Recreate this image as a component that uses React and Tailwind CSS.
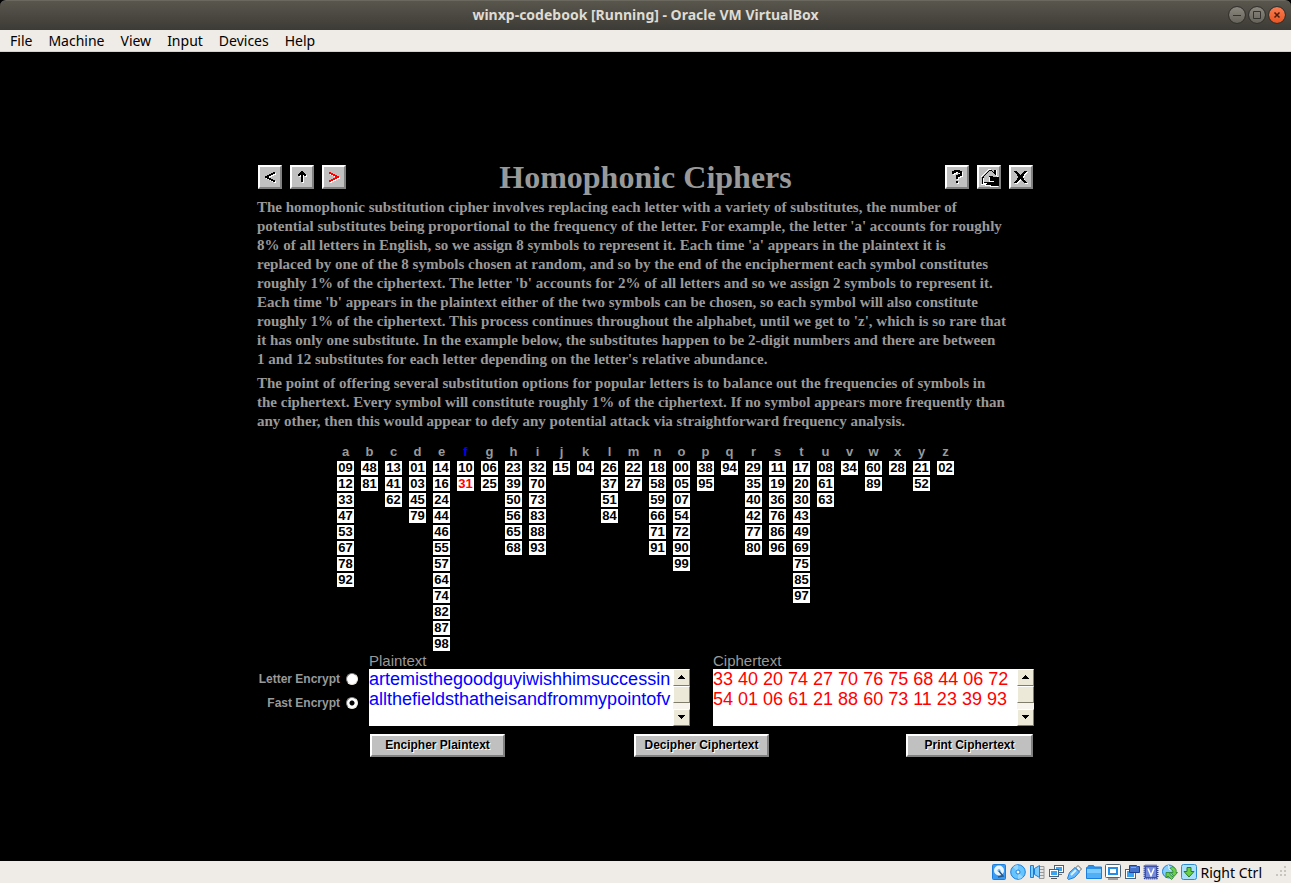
import React from "react";

const columns = {
  a: "09 12 33 47 53 67 78 92", b: "48 81", c: "13 41 62", d: "01 03 45 79",
  e: "14 16 24 44 46 55 57 64 74 82 87 98", f: "10 31", g: "06 25",
  h: "23 39 50 56 65 68", i: "32 70 73 83 88 93", j: "15", k: "04",
  l: "26 37 51 84", m: "22 27", n: "18 58 59 66 71 91", o: "00 05 07 54 72 90 99",
  p: "38 95", q: "94", r: "29 35 40 42 77 80", s: "11 19 36 76 86 96",
  t: "17 20 30 43 49 69 75 85 97", u: "08 61 63", v: "34", w: "60 89",
  x: "28", y: "21 52", z: "02",
};
const letters = Object.keys(columns);
const substitutes = letters.map((l) => columns[l].split(" "));
const rowIndexes = Array.from({ length: 12 }, (_, i) => i);

const intro = [
  "The homophonic substitution cipher involves replacing each letter with a variety of substitutes, the number of",
  "potential substitutes being proportional to the frequency of the letter. For example, the letter 'a' accounts for roughly",
  "8% of all letters in English, so we assign 8 symbols to represent it. Each time 'a' appears in the plaintext it is",
  "replaced by one of the 8 symbols chosen at random, and so by the end of the encipherment each symbol constitutes",
  "roughly 1% of the ciphertext. The letter 'b' accounts for 2% of all letters and so we assign 2 symbols to represent it.",
  "Each time 'b' appears in the plaintext either of the two symbols can be chosen, so each symbol will also constitute",
  "roughly 1% of the ciphertext. This process continues throughout the alphabet, until we get to 'z', which is so rare that",
  "it has only one substitute. In the example below, the substitutes happen to be 2-digit numbers and there are between",
  "1 and 12 substitutes for each letter depending on the letter's relative abundance.",
];
const point = [
  "The point of offering several substitution options for popular letters is to balance out the frequencies of symbols in",
  "the ciphertext. Every symbol will constitute roughly 1% of the ciphertext. If no symbol appears more frequently than",
  "any other, then this would appear to defy any potential attack via straightforward frequency analysis.",
];

const bevel = "border-2 border-t-white border-l-white border-r-[#808080] border-b-[#808080] bg-[#c0c0c0]";

function Paragraph({ lines }) {
  return (
    <p className="whitespace-nowrap font-['Liberation_Serif',serif] text-[15px] leading-[19px] font-bold text-[#999999]">
      {lines.map((line) => (
        <React.Fragment key={line}>{line}<br /></React.Fragment>
      ))}
    </p>
  );
}

function NavButton({ label, children }) {
  return (
    <button aria-label={label} className={`flex size-6 items-center justify-center ${bevel}`}>
      <svg width="20" height="20" viewBox="0 0 20 20" fill="none" shapeRendering="crispEdges">{children}</svg>
    </button>
  );
}

function Glyph({ d, color = "#000", width = 2 }) {
  return (
    <>
      <path d={d} stroke="#fff" strokeWidth={width} transform="translate(1 1)" />
      <path d={d} stroke={color} strokeWidth={width} />
    </>
  );
}

function ScrollBar({ name }) {
  const part = "flex items-center justify-center border border-t-white border-l-white border-r-[#807d6c] border-b-[#807d6c] bg-[#ece9d8]";
  return (
    <div className="flex w-[17px] shrink-0 flex-col bg-[#f6f4ec]">
      <button aria-label={`Scroll ${name} up`} className={`h-[17px] ${part}`}>
        <svg width="7" height="4" shapeRendering="crispEdges"><path d="M3 0h1v1h1v1h1v1h1v1H0V3h1V2h1V1h1z" /></svg>
      </button>
      <div className={`h-[17px] ${part}`} />
      <div className="flex-1" />
      <button aria-label={`Scroll ${name} down`} className={`h-[17px] ${part}`}>
        <svg width="7" height="4" shapeRendering="crispEdges"><path d="M0 0h7v1H6v1H5v1H4v1H3V3H2V2H1V1H0z" /></svg>
      </button>
    </div>
  );
}

function TextPanel({ id, label, color, value }) {
  return (
    <div className="w-[321px]">
      <label htmlFor={id} className="block h-4 text-[15px] leading-4 text-[#999999]">{label}</label>
      <div className="flex h-[57px] bg-white">
        <textarea id={id} wrap="off" defaultValue={value} spellCheck={false}
          className={`block h-full min-w-0 flex-1 resize-none overflow-hidden bg-white text-lg leading-5 outline-none ${color}`} />
        <ScrollBar name={label} />
      </div>
    </div>
  );
}

function Radio({ label, checked }) {
  return (
    <label className="flex h-6 items-center justify-end gap-[6px] text-xs font-bold whitespace-nowrap text-[#999999]">
      {label}
      <input type="radio" name="mode" defaultChecked={checked}
        className="size-3 appearance-none rounded-full border border-t-[#808080] border-l-[#808080] border-r-[#ece9d8] border-b-[#ece9d8] bg-white checked:bg-[radial-gradient(circle,#000_2px,#fff_3px)]" />
    </label>
  );
}

function Action({ children, className }) {
  return (
    <button className={`flex h-[23px] items-center justify-center text-xs font-bold text-black [text-shadow:1px_1px_0_#fff] ${bevel} ${className}`}>
      {children}
    </button>
  );
}

const stroke = { stroke: "#1a7fdc", strokeWidth: 1 };
const statusIcons = [
  ["Hard disks", <><rect x="1.5" y=".5" width="13" height="15" rx="1" fill="#3a9cf5" {...stroke} /><circle cx="8" cy="6.500" r="5" fill="#e8f5ff" /><circle cx="8" cy="6.500" r="1.500" fill="#75b7e8" /><path d="M8 7l4 5-5 1" fill="none" stroke="#24598c" strokeWidth="1.500" /></>],
  ["Optical drives", <><circle cx="8" cy="8" r="7.300" fill="#66c4ff" {...stroke} /><path d="M8 8L3 3a7 7 0 0 1 5-2zM8 8l5 5a7 7 0 0 1-5 2z" fill="#94d6ff" /><circle cx="8" cy="8" r="2" fill="#fff" {...stroke} /></>],
  ["Audio", <><path d="M11 2.500h4v12h-5" fill="#e4e4e4" stroke="#999" /><path d="M11 5.500h4M11 8.500h4M11 11.500h4" stroke="#999" /><path d="M1.500 1.500h3v12h-3zM5.500 4.500l5-3v12l-5-3z" fill="#7ccbff" {...stroke} /></>],
  ["Network", <><rect x="6.500" y="1.500" width="9" height="7" fill="#fff" stroke="#48627a" /><rect x="8" y="3" width="6" height="4" fill="#3ba4f2" /><path d="M10 10.500h4" stroke="#777" /><rect x="1.500" y="5.500" width="9" height="7" fill="#fff" stroke="#48627a" /><rect x="3" y="7" width="6" height="4" fill="#3ba4f2" /><path d="M3 14.500h6" stroke="#555" /></>],
  ["USB", <><path d="M11 1.500l3.500 3.500-2.500 2.500L8.500 4z" fill="#eee" stroke="#666" /><path d="M8 3.500l4.500 4.500-5 5.500-6 2-1-1 2-6z" fill="#63baff" {...stroke} /><path d="M4 11l5-5" stroke="#d7f1ff" strokeWidth="2" /></>],
  ["Shared folders", <><path d="M.5 14.500v-11h1l1-2h5l1 1.500h7v11.500z" fill="#2c91e6" {...stroke} /><path d="M1 5h14v9H1z" fill="#7bcaff" /><path d="M1 9h14v5H1z" fill="#50aff5" /></>],
  ["Display", <><rect x=".5" y=".5" width="15" height="13" rx="1" fill="#fff" stroke="#4e6474" /><rect x="4" y="4" width="8" height="6" fill="#fff" stroke="#248de6" strokeWidth="2" /><path d="M3 15h10" stroke="#555" /></>],
  ["Recording", <><rect x="1.500" y="5.500" width="10" height="9" fill="#fff" stroke="#48627a" /><rect x="3" y="7" width="7" height="6" fill="#3ba4f2" /><path d="M5.500 1.500h7l1 1h2v6h-10z" fill="#4772c9" stroke="#1e3f93" /><path d="M7 3.500h5" stroke="#7aa8f0" /></>],
  ["Processor", <><rect x="1.500" y="1.500" width="13" height="13" rx="1" fill="#7a90df" stroke="#2d3f93" strokeWidth="2" strokeDasharray="1 1" /><rect x="2.500" y="2.500" width="11" height="11" fill="#7489dc" stroke="#3e50a4" /><path d="M5 4.500l3 7 3-7" fill="none" stroke="#fff" strokeWidth="1.500" /></>],
  ["Mouse integration", <><circle cx="7" cy="7.500" r="6.500" fill="#84cfff" {...stroke} /><path d="M6 1c2 2 0 4 2 5l3-1" stroke="#fff" fill="none" /><path d="M10 2.500c3 1 5 3 4 6h1.500L12 12.500 9 8.500h2c0-2-1-3-3-4z" fill="#6bd04a" stroke="#28802d" strokeWidth=".8" /><path d="M4 8.500h5l-1.500 1.500 4 3.500-2 2L6 12l-2 2z" fill="#6bd04a" stroke="#28802d" strokeWidth=".8" /></>],
  ["Keyboard", <><rect x=".5" y=".5" width="15" height="15" rx="2" fill="#a9e0ff" stroke="#2d8cd0" /><path d="M6 3.500h4v4h3L8 13 3 7.500h3z" fill="#69d047" stroke="#287d26" /></>],
];

export default function App() {
  return (
    <div className="flex min-h-screen flex-col bg-black font-['Liberation_Sans',Arial,sans-serif]">
      <header className="font-['Noto_Sans',sans-serif]">
        <div className="bg-black">
          <div className="grid h-[30px] grid-cols-[1fr_auto_1fr] items-center rounded-t-md border-t border-[#6b685f] bg-linear-to-b from-[#59564d] to-[#3d3b36] px-[6px] pb-[2px]">
            <h1 className="col-start-2 text-[14px] font-bold text-[#dfdbd2]">winxp-codebook [Running] - Oracle VM VirtualBox</h1>
            <div className="flex justify-end gap-1">
              <button aria-label="Minimize" className="size-4 rounded-full bg-linear-to-b from-[#8b8880] to-[#66635b] outline outline-[#33322d]">
                <svg viewBox="0 0 16 16"><path d="M4 8.500h8" stroke="#33322d" /></svg>
              </button>
              <button aria-label="Maximize" className="size-4 rounded-full bg-linear-to-b from-[#8b8880] to-[#66635b] outline outline-[#33322d]">
                <svg viewBox="0 0 16 16"><path d="M4.500 4.500h7v7h-7z" fill="none" stroke="#33322d" /></svg>
              </button>
              <button aria-label="Close" className="size-4 rounded-full bg-linear-to-b from-[#f97c50] to-[#e9541f] outline outline-[#33322d]">
                <svg viewBox="0 0 16 16"><path d="M5.500 5.500l5 5M10.500 5.500l-5 5" stroke="#4a1d0c" strokeWidth="1.500" /></svg>
              </button>
            </div>
          </div>
        </div>
        <nav className="flex h-[22px] items-center gap-4 border-b border-[#d5d2cc] bg-[#efebe7] px-[10px] text-[14px] text-black">
          {["File", "Machine", "View", "Input", "Devices", "Help"].map((item) => (
            <button key={item}>{item}</button>
          ))}
        </nav>
      </header>

      <main className="flex flex-1 items-center justify-center pt-2">
        <div className="w-full max-w-[777px]">
          <div className="flex items-center justify-between px-px">
            <div className="flex gap-2">
              <NavButton label="Back"><Glyph d="M15 5.500L6 10l9 4.500" /></NavButton>
              <NavButton label="Up"><Glyph d="M10 15V5M6 9l4-4 4 4" /></NavButton>
              <NavButton label="Next"><Glyph d="M5 5.500L14 10l-9 4.500" color="#f00" /></NavButton>
            </div>
            <h2 className="font-['Liberation_Serif',serif] text-[32px] leading-[22px] font-bold text-[#999999]">Homophonic Ciphers</h2>
            <div className="flex gap-2">
              <NavButton label="Help"><Glyph d="M6 7V5h2V4h4v1h2v3h-2v1h-2v3M10 14v2" /></NavButton>
              <NavButton label="Home">
                <path d="M2 11l8-8h2l3 3V3h2v5l3 3v8H9l-6-2v-6z" fill="#000" />
                <path d="M4 10l6-6h2l6 6h-4v-1h-4v5h2v1H5v-5z" fill="#c0c0c0" />
                <path d="M2 10l8-8h2M17 3v5l2 2" stroke="#fff" />
                <path d="M4.500 11v5h3M10.500 10v4.500h4" stroke="#fff" />
                <path d="M2 17h4v1h5v1h8" stroke="#fff" />
              </NavButton>
              <NavButton label="Close page"><Glyph d="M4 4l11 12M15 4L4 16" width={2.5} /></NavButton>
            </div>
          </div>

          <div className="mt-[9px] flex flex-col gap-[5px]">
            <Paragraph lines={intro} />
            <Paragraph lines={point} />
          </div>

          <table className="mt-[14px] ml-20 border-collapse text-[13px] leading-[14px] font-bold">
            <thead>
              <tr>
                {letters.map((l) => (
                  <th key={l} className="h-4 w-6 p-0 align-top">
                    <span className={`block w-[17px] text-center ${l === "f" ? "text-[#0000ff]" : "text-[#999999]"}`}>{l}</span>
                  </th>
                ))}
              </tr>
            </thead>
            <tbody>
              {rowIndexes.map((r) => (
                <tr key={r}>
                  {substitutes.map((list, c) => (
                    <td key={letters[c]} className="h-4 w-6 p-0 align-top">
                      {list[r] && (
                        <span className={`block h-[14px] w-[17px] bg-white text-center ${list[r] === "31" ? "text-[#ff0000]" : "text-black"}`}>{list[r]}</span>
                      )}
                    </td>
                  ))}
                </tr>
              ))}
            </tbody>
          </table>

          <div className="flex justify-between">
            <div className="flex w-[101px] flex-col pt-[14px]">
              <Radio label="Letter Encrypt" />
              <Radio label="Fast Encrypt" checked />
            </div>
            <div className="flex gap-[23px]">
              <TextPanel id="plain" label="Plaintext" color="text-[#0000ff]"
                value={"artemisthegoodguyiwishhimsuccessin\nallthefieldsthatheisandfrommypointofv"} />
              <TextPanel id="cipher" label="Ciphertext" color="text-[#ff0000]"
                value={"33 40 20 74 27 70 76 75 68 44 06 72\n54 01 06 61 21 88 60 73 11 23 39 93"} />
            </div>
          </div>
          <div className="mt-2 ml-[113px] flex justify-between pr-px">
            <div className="flex gap-[129px]">
              <Action className="w-[135px]">Encipher Plaintext</Action>
              <Action className="w-[135px]">Decipher Ciphertext</Action>
            </div>
            <Action className="w-[127px]">Print Ciphertext</Action>
          </div>
        </div>
      </main>

      <footer className="flex h-[22px] items-center justify-end gap-[3px] bg-[#efebe7] pr-1 font-['Noto_Sans',sans-serif] text-[14px] text-black">
        {statusIcons.map(([name, art]) => (
          <svg key={name} role="img" aria-label={name} width="16" height="16" viewBox="0 0 16 16">{art}</svg>
        ))}
        <span className="pr-[10px]">Right Ctrl</span>
        <svg width="12" height="12" viewBox="0 0 12 12" fill="#c9c4bc">
          <path d="M9 0h2v2H9zM5 4h2v2H5zM9 4h2v2H9zM1 8h2v2H1zM5 8h2v2H5zM9 8h2v2H9z" />
        </svg>
      </footer>
    </div>
  );
}
